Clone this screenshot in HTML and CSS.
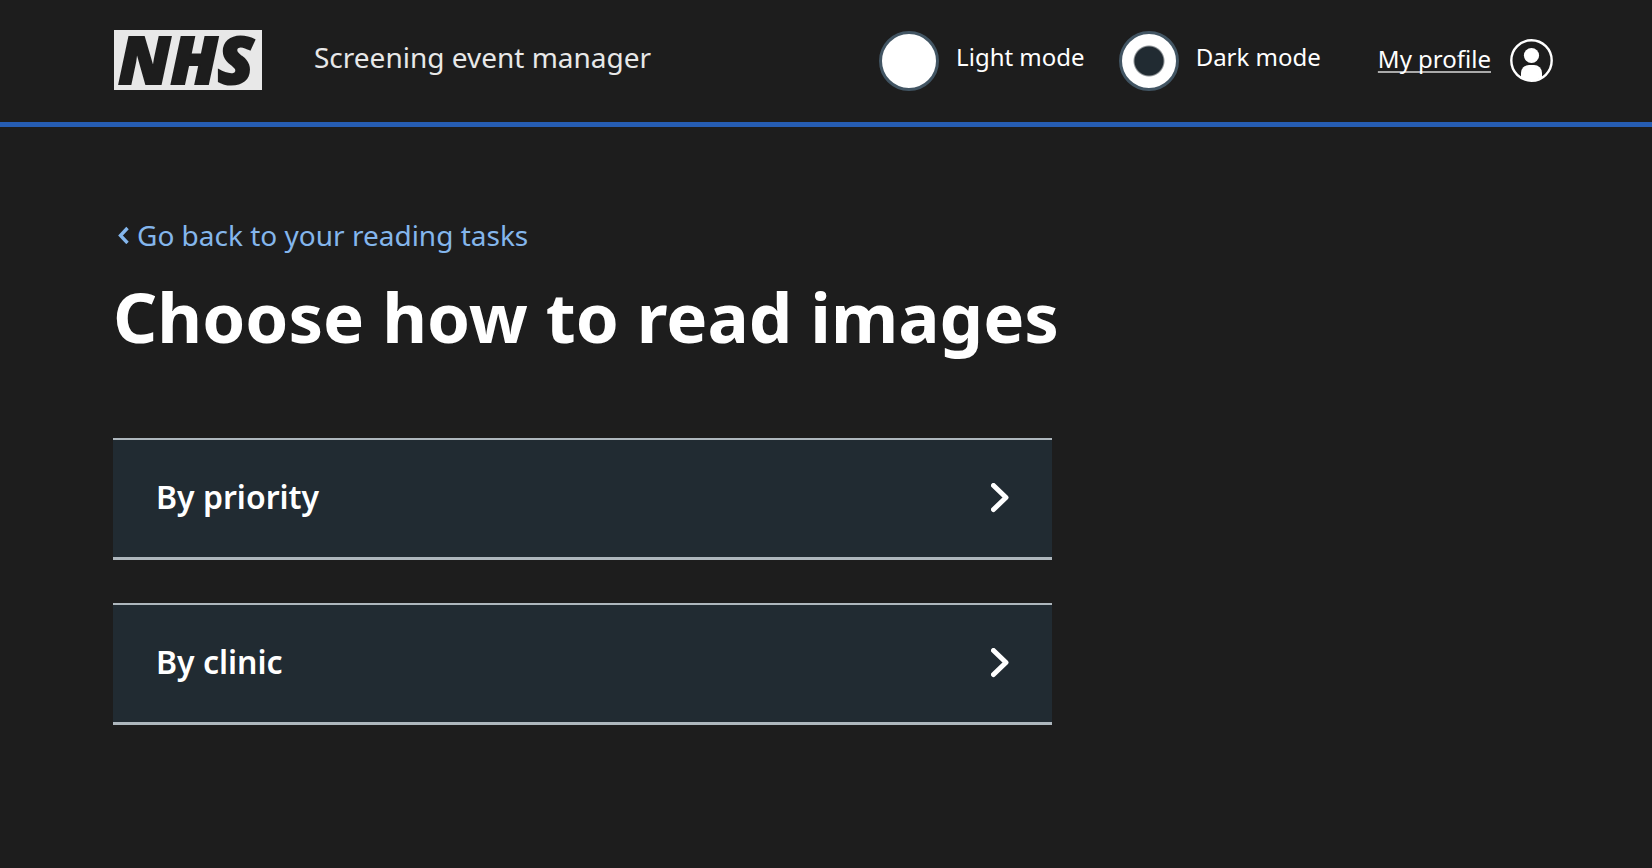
FILE: index.html
```html
<!DOCTYPE html>
<html lang="en">
<head>
<meta charset="utf-8">
<meta name="viewport" content="width=device-width, initial-scale=1">
<title>Choose how to read images</title>
<link rel="stylesheet" href="styles.css">
</head>
<body>
<header class="header">
  <span class="logo">NHS</span>
  <span class="service">Screening event manager</span>
  <div class="modes" role="radiogroup" aria-label="Colour mode">
    <div class="mode">
      <input class="radio" type="radio" name="mode" id="light">
      <label class="mode-label" for="light">Light mode</label>
    </div>
    <div class="mode">
      <input class="radio" type="radio" name="mode" id="dark" checked>
      <label class="mode-label" for="dark">Dark mode</label>
    </div>
  </div>
  <div class="profile">
    <a class="profile-link" href="#">My profile</a>
    <svg class="avatar" viewBox="0 0 43 43" aria-hidden="true">
      <circle cx="21.5" cy="21.5" r="20.2" fill="none" stroke="#fff" stroke-width="2.4"/>
      <circle cx="21.5" cy="16.5" r="7.6" fill="#fff"/>
      <path d="M11 38.5V34a8 8 0 0 1 8-8h5a8 8 0 0 1 8 8v4.500A21 21 0 0 1 11 38.500Z" fill="#fff"/>
    </svg>
  </div>
</header>
<main class="main">
  <a class="back" href="#">
    <svg class="back-icon" viewBox="0 0 12 18" aria-hidden="true"><path d="M9.500 2 2.500 9.500l7 7.500" fill="none" stroke="currentColor" stroke-width="3.400"/></svg>
    <span>Go back to your reading tasks</span>
  </a>
  <h1 class="title">Choose how to read images</h1>
  <nav class="cards" aria-label="Reading options">
    <a class="card" href="#">
      <span class="card-label">By priority</span>
      <svg class="chevron" viewBox="0 0 18 30" aria-hidden="true"><path d="M2.500 2.500 15 14.500 2.500 26.500" fill="none" stroke="#fff" stroke-width="5" stroke-linecap="round" stroke-linejoin="round"/></svg>
    </a>
    <a class="card" href="#">
      <span class="card-label">By clinic</span>
      <svg class="chevron" viewBox="0 0 18 30" aria-hidden="true"><path d="M2.500 2.500 15 14.500 2.500 26.500" fill="none" stroke="#fff" stroke-width="5" stroke-linecap="round" stroke-linejoin="round"/></svg>
    </a>
  </nav>
</main>
</body>
</html>
```
FILE: styles.css
```css
* {
  box-sizing: border-box;
}

body {
  margin: 0;
  background: #1d1d1d;
  color: #fff;
  font-family: "Noto Sans", sans-serif;
}

.header {
  display: flex;
  align-items: center;
  padding: 29px 99px 31px 114px;
  border-bottom: 5px solid #265db3;
}

.logo {
  width: 148px;
  height: 60px;
  padding-right: 4px;
  background: #e8e8e8;
  color: #1d1d1d;
  font-size: 66px;
  font-weight: 900;
  font-style: italic;
  line-height: 56px;
  text-align: center;
  white-space: nowrap;
  -webkit-text-stroke: 2px #1d1d1d;
}

.service {
  margin-left: 52px;
  padding-bottom: 6px;
  color: #e8e8e8;
  font-size: 28px;
  line-height: 36px;
}

.modes {
  display: flex;
  gap: 34px;
  margin-left: auto;
}

.mode {
  display: flex;
  align-items: center;
  gap: 17px;
  padding-top: 2px;
}

.radio {
  appearance: none;
  width: 60px;
  height: 60px;
  margin: 0;
  border: 3px solid #425563;
  border-radius: 50%;
  background: #fff;
}

.radio:checked {
  background: radial-gradient(circle, #212b32 14px, #fff 16px);
}

.mode-label {
  padding-bottom: 8px;
  font-size: 24px;
  line-height: 32px;
}

.profile {
  display: flex;
  align-items: center;
  gap: 19px;
  margin-left: 57px;
}

.profile-link {
  padding-bottom: 3px;
  color: #fff;
  font-size: 24px;
  line-height: 32px;
  text-decoration: underline #aaa 2px;
  text-underline-offset: 3px;
  text-decoration-skip-ink: none;
}

.avatar {
  width: 43px;
  height: 43px;
}

.main {
  max-width: 1165px;
  padding: 88px 113px;
}

.back {
  display: inline-flex;
  align-items: center;
  gap: 7px;
  padding-left: 5px;
  color: #84b6ec;
  font-size: 28px;
  line-height: 40px;
  text-decoration: none;
}

.back-icon {
  width: 12px;
  height: 18px;
}

.title {
  margin: 11px 0 72px;
  font-size: 69px;
  font-weight: 700;
  line-height: 100px;
  white-space: nowrap;
}

.cards {
  display: grid;
  gap: 43px;
}

.card {
  display: flex;
  align-items: center;
  justify-content: space-between;
  padding: 36px 43px 37px;
  border-top: 2px solid #aeb7bd;
  border-bottom: 3px solid #aeb7bd;
  background: #212b32;
  color: #fff;
  font-size: 32px;
  font-weight: 600;
  line-height: 44px;
  text-decoration: none;
}

.card-label {
  padding-bottom: 2px;
  line-height: 42px;
}

.chevron {
  width: 18px;
  height: 30px;
}
```
